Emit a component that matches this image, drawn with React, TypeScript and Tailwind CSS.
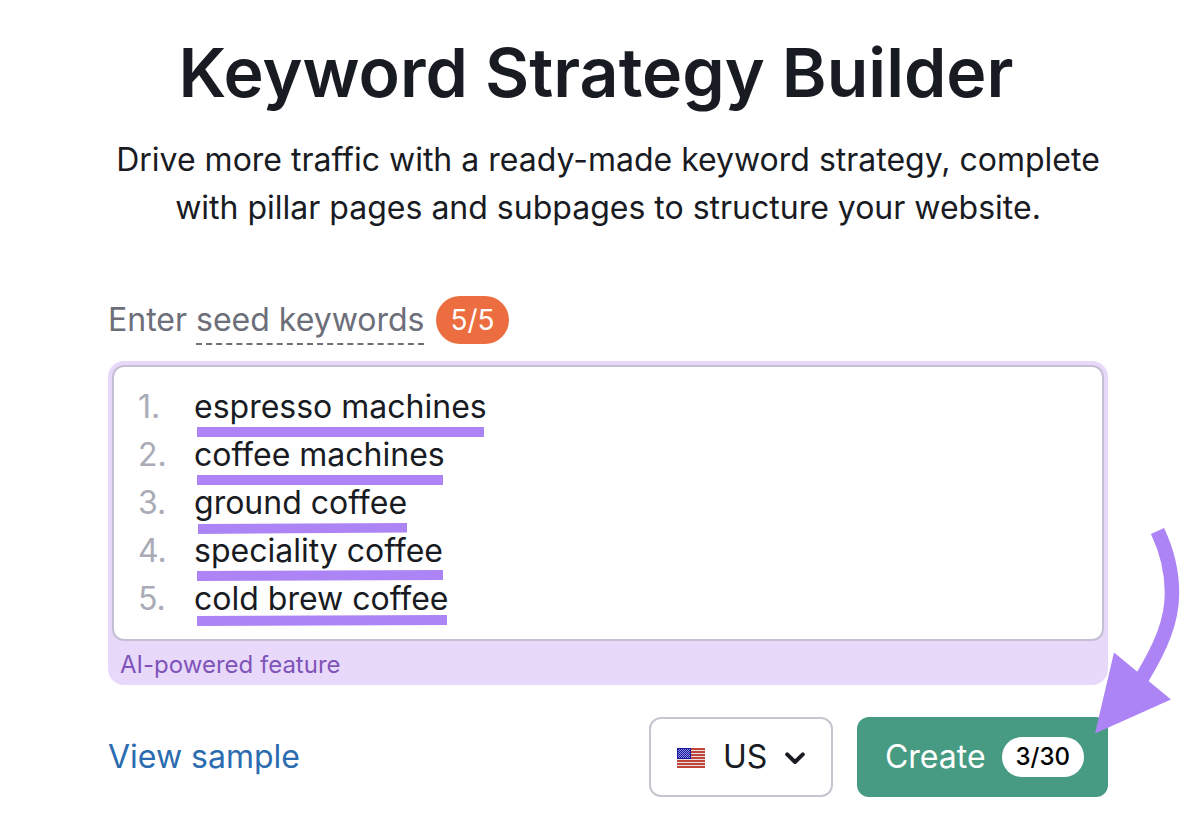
import { useState } from "react"

const MARK_COLOR = "#ad84f5"

const UsFlag = () => (
    <svg viewBox="0 0 28 20" className="w-7 h-5" shapeRendering="crispEdges" aria-hidden="true">
        <rect width="28" height="20" fill="#eadfe0" />
        {[0, 3, 6, 9, 12, 15, 18].map((y) => (
            <rect key={y} y={y} width="28" height="2" fill="#c2453a" />
        ))}
        <rect width="14" height="11" fill="#1a1a9c" />
        {[1, 2, 3, 4, 5, 6, 7, 8, 9].map((y) =>
            [1, 3, 5, 7, 9, 11].map((x) => (
                <rect key={`${x}-${y}`} x={x + (y % 2)} y={y} width="1" height="1" fill="#8f8fe6" />
            ))
        )}
    </svg>
)

const Chevron = () => (
    <svg viewBox="0 0 20 14" className="w-5 h-3.5" fill="none" aria-hidden="true">
        <path d="M2.2 3.4 L10 11 L17.8 3.4" stroke="#191b23" strokeWidth="4" strokeLinecap="round" strokeLinejoin="round" />
    </svg>
)

// marker strokes drawn under each keyword
const Markers = () => (
    <svg viewBox="0 0 300 250" className="absolute left-0 top-0 w-[300px] h-[250px] pointer-events-none" fill={MARK_COLOR} aria-hidden="true">
        <path d="M3 44 H290 V54 H3 Z" />
        <path d="M3 92 H249 V102 H3 Z" />
        <path d="M4 141 L213 140 V149.5 L4 151 Z" />
        <path d="M3 188 L249 187 V197 L3 198 Z" />
        <path d="M3 233 L253 232 V242 L3 243 Z" />
    </svg>
)

const Arrow = () => (
    <svg viewBox="0 0 92 215" className="absolute -top-48 right-[-74px] w-[92px] h-[215px] pointer-events-none" fill="none" aria-hidden="true">
        <path d="M67.5 6 C77 26 82 47 82 68 C82 97 70 123 52 153" stroke={MARK_COLOR} strokeWidth="14.5" />
        <path d="M5 208.5 L24 127.5 L81 174.5 Z" fill={MARK_COLOR} />
    </svg>
)

export default function App() {
    const [keywords, setKeywords] = useState("espresso machines\ncoffee machines\nground coffee\nspeciality coffee\ncold brew coffee")
    const [country, setCountry] = useState("US")

    return (
        <main className="min-h-screen overflow-x-hidden bg-white pl-[108px] pr-[94px] pt-8 pb-10 font-['Inter','Liberation_Sans',sans-serif] text-[32px] leading-[48px] text-[#191b23]">
            <header className="text-center">
                <h1 className="pr-6 text-[68px] leading-[80px] font-semibold">Keyword Strategy Builder</h1>
                <p className="mt-6">
                    Drive more traffic with a ready-made keyword strategy, complete with pillar pages and subpages to structure your website.
                </p>
            </header>

            <form onSubmit={(e) => e.preventDefault()}>
                <div className="mt-16 flex items-center text-[#6c6e79]">
                    <label htmlFor="keywords">
                        Enter <span className="border-b-2 border-dashed border-[#6c6e79] pb-1">seed keywords</span>
                    </label>
                    <span className="ml-3 rounded-full bg-[#ec6e40] px-3.5 text-[28px] text-white">5/5</span>
                </div>

                <div className="mt-[17px] rounded-2xl bg-[#e8d9fb] p-1 pb-0">
                    <div className="flex rounded-xl border-2 border-[#c5bfd3] bg-white py-4 pl-6 pr-4">
                        <ol className="w-14 shrink-0 text-[#a9abb6]" aria-hidden="true">
                            {[1, 2, 3, 4, 5].map((n) => (
                                <li key={n}>{n}.</li>
                            ))}
                        </ol>
                        <div className="relative flex grow">
                            <textarea
                                id="keywords"
                                rows={5}
                                value={keywords}
                                spellCheck={false}
                                onChange={(e) => setKeywords(e.target.value)}
                                className="w-full resize-none overflow-hidden bg-transparent outline-none"
                            />
                            <Markers />
                        </div>
                    </div>
                    <p className="pl-2 pt-1 text-2xl leading-10 text-[#8053b8]">AI-powered feature</p>
                </div>

                <div className="mt-8 flex items-center">
                    <a href="#sample" className="text-[#2b6cb0]">View sample</a>
                    <div className="relative ml-auto">
                        <select
                            aria-label="Country"
                            value={country}
                            onChange={(e) => setCountry(e.target.value)}
                            className="h-20 w-[184px] appearance-none rounded-xl border-2 border-[#c4c7cf] bg-white pl-[72px]"
                        >
                            <option value="US">US</option>
                        </select>
                        <span className="absolute inset-y-0 left-7 flex items-center pt-0.5 pointer-events-none">
                            <UsFlag />
                        </span>
                        <span className="absolute inset-y-0 right-7 flex items-center pt-0.5 pointer-events-none">
                            <Chevron />
                        </span>
                    </div>
                    <div className="relative ml-6">
                        <button type="submit" className="flex h-20 items-center gap-4 rounded-xl bg-[#479b82] pl-7 pr-6 text-white">
                            Create
                            <span className="rounded-full bg-white px-3.5 text-2xl leading-10 font-medium text-black">3/30</span>
                        </button>
                        <Arrow />
                    </div>
                </div>
            </form>
        </main>
    )
}
